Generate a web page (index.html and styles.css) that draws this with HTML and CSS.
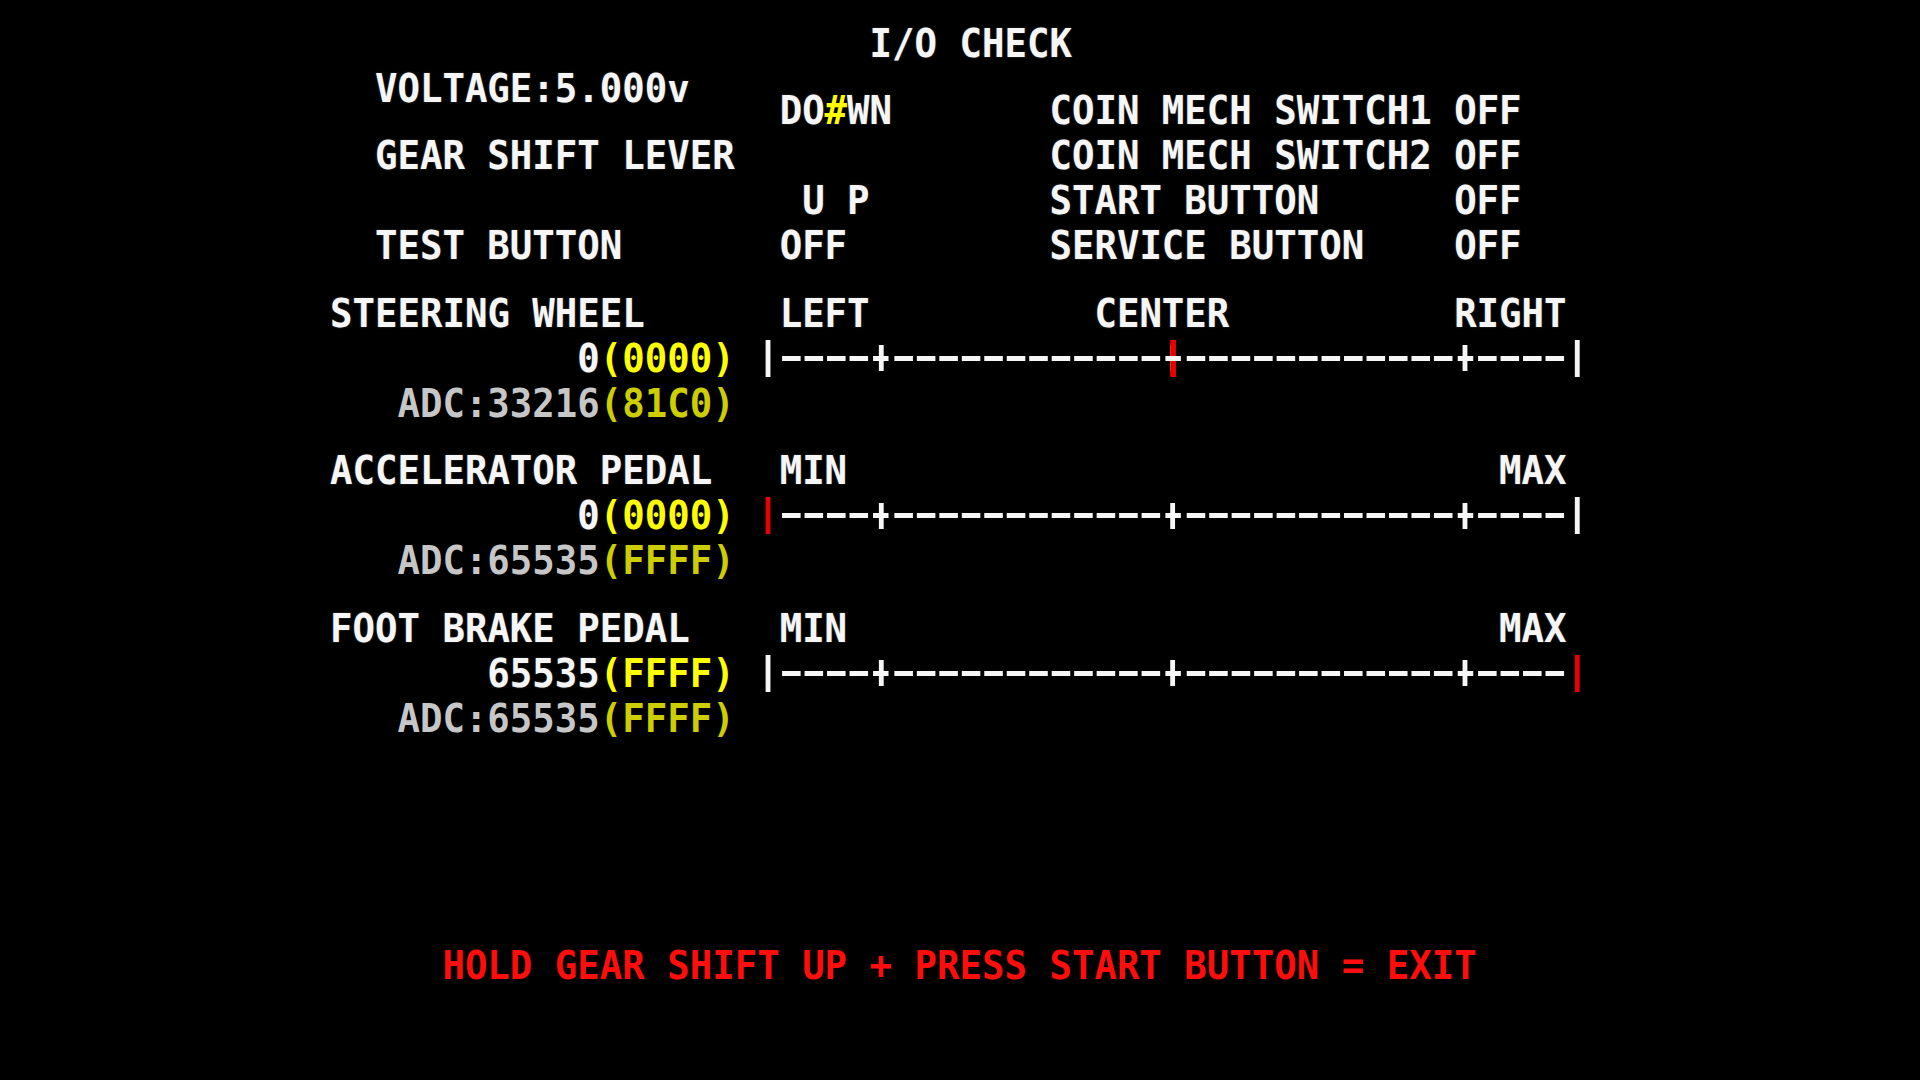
FILE: index.html
```html
<!DOCTYPE html>
<html lang="en">
  <head>
    <meta charset="UTF-8" />
    <meta name="viewport" content="width=device-width, initial-scale=1.0" />
    <title>I/O CHECK</title>
    <link rel="stylesheet" href="styles.css">
  </head>

  <body>
    <div class="screen">
      <div class="line title">I/O CHECK</div>

      <div class="status">
        <div class="status-left">
          <div class="line">VOLTAGE:5.000v</div>
          <div class="line gear">GEAR SHIFT LEVER</div>
          <div class="line test">TEST BUTTON</div>
        </div>
        <div class="status-right">
          <div class="line">DO<span class="hi">#</span>WN       COIN MECH SWITCH1 OFF</div>
          <div class="line">            COIN MECH SWITCH2 OFF</div>
          <div class="line"> U P        START BUTTON      OFF</div>
          <div class="line">OFF         SERVICE BUTTON    OFF</div>
        </div>
      </div>

      <!-- steering -->
      <section class="axis">
        <div class="line">STEERING WHEEL      LEFT          CENTER          RIGHT</div>
        <div class="reading">
          <span class="value">0<span class="hex">(0000)</span></span>
          <div class="bar">
            <span class="cell end"></span>
            <span class="run run-4"></span>
            <span class="cell cross"></span>
            <span class="run run-12"></span>
            <span class="cell cross"><i class="mark"></i></span>
            <span class="run run-12"></span>
            <span class="cell cross"></span>
            <span class="run run-4"></span>
            <span class="cell end"></span>
          </div>
        </div>
        <div class="reading adc">
          <span class="value">ADC:33216<span class="hex">(81C0)</span></span>
        </div>
      </section>

      <!-- accelerator -->
      <section class="axis">
        <div class="line">ACCELERATOR PEDAL   MIN                             MAX</div>
        <div class="reading">
          <span class="value">0<span class="hex">(0000)</span></span>
          <div class="bar">
            <span class="cell end is-set"></span>
            <span class="run run-4"></span>
            <span class="cell cross"></span>
            <span class="run run-12"></span>
            <span class="cell cross"></span>
            <span class="run run-12"></span>
            <span class="cell cross"></span>
            <span class="run run-4"></span>
            <span class="cell end"></span>
          </div>
        </div>
        <div class="reading adc">
          <span class="value">ADC:65535<span class="hex">(FFFF)</span></span>
        </div>
      </section>

      <!-- brake -->
      <section class="axis">
        <div class="line">FOOT BRAKE PEDAL    MIN                             MAX</div>
        <div class="reading">
          <span class="value">65535<span class="hex">(FFFF)</span></span>
          <div class="bar">
            <span class="cell end"></span>
            <span class="run run-4"></span>
            <span class="cell cross"></span>
            <span class="run run-12"></span>
            <span class="cell cross"></span>
            <span class="run run-12"></span>
            <span class="cell cross"></span>
            <span class="run run-4"></span>
            <span class="cell end is-set"></span>
          </div>
        </div>
        <div class="reading adc">
          <span class="value">ADC:65535<span class="hex">(FFFF)</span></span>
        </div>
      </section>

      <div class="line exit">HOLD GEAR SHIFT UP + PRESS START BUTTON = EXIT</div>
    </div>
  </body>
</html>
```

FILE: styles.css
```css
* { box-sizing: border-box; }
body { margin: 0; padding-top: 20.5px; min-height: 100vh; background: #000; color: #f6f6f6; }

/* one character cell = 1ch, squeezed to 22.5px wide */
.screen { margin-left: 329.5px; font: bold 38.6px "DejaVu Sans Mono", monospace; transform: scaleX(.968); transform-origin: 0 0; text-shadow: 0 0 2px rgba(255,255,255,.3); }
.line { height: 45px; line-height: 45px; white-space: pre; }
.title { padding-left: 24ch; }

.status { display: flex; }
.status-left { width: 20ch; padding-left: 2ch; }
.status-left .gear { margin-top: 22.5px; }
.status-left .test { margin-top: 45px; }
.status-right { margin-top: 22.5px; }
.hi { color: #ffff00; text-shadow: none; }

.axis { margin-top: 22.5px; }
.reading { display: flex; height: 45px; }
.value { width: 19ch; padding-right: 1ch; text-align: right; line-height: 45px; white-space: pre; }
.value .hex { color: #ffff00; text-shadow: none; }
.adc .value { color: #c6c6c6; text-shadow: none; }
.adc .value .hex { color: #cdcd00; }

.bar { display: flex; height: 45px; }
.cell { width: 1ch; display: grid; place-items: center; }
.end::before { content: ""; width: 5px; height: 37px; background: #f6f6f6; }
.end.is-set::before { background: #e80000; }
.cross::before { content: ""; grid-area: 1 / 1; width: 5px; height: 26px; background: #f6f6f6; }
.cross::after { content: ""; grid-area: 1 / 1; width: 16px; height: 5px; background: #f6f6f6; }
.mark { grid-area: 1 / 1; width: 6px; height: 37px; background: #e80000; }
.run { background-image: linear-gradient(to right, transparent 2px, #f6f6f6 2px, #f6f6f6 calc(100% - 2px), transparent calc(100% - 2px)); background-size: 1ch 5px; background-repeat: repeat-x; background-position: 0 50%; }
.run-4 { width: 4ch; }
.run-12 { width: 12ch; }

.exit { margin-top: 202.5px; padding-left: 5ch; color: #ff0c0c; text-shadow: none; }
```
